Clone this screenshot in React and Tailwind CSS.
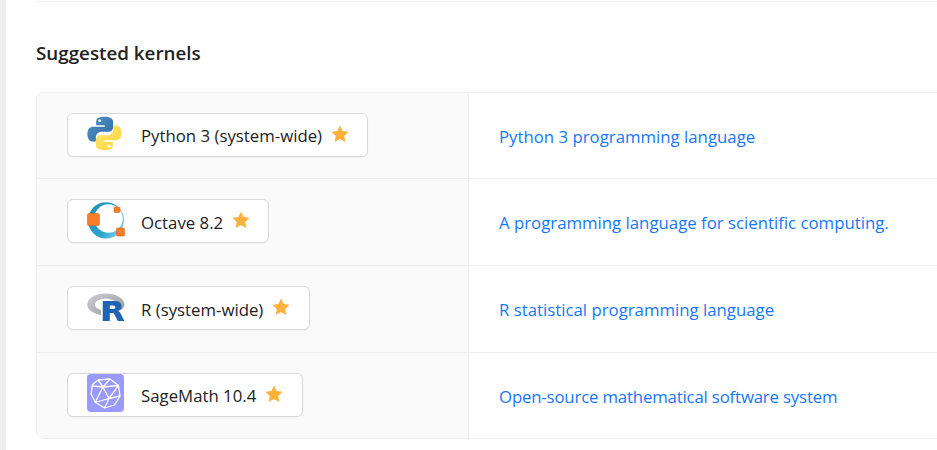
const FONT = "font-['Open_Sans',sans-serif]";

function Star() {
  return (
    <svg width="18" height="18" viewBox="0 0 18 18" className="shrink-0">
      <path d="M9 .6l2.600 5.500 6 .7-4.400 4.200 1.200 5.900L9 14 3.600 16.900l1.200-5.900L.4 6.800l6-.7z" fill="#ffb13b" />
    </svg>
  );
}

function PythonLogo() {
  return (
    <svg width="35" height="35" viewBox="0 0 36 36">
      <defs>
        <linearGradient id="pb" x1="0" y1="0" x2="1" y2="1">
          <stop offset="0" stopColor="#4f93c9" />
          <stop offset="1" stopColor="#336b9d" />
        </linearGradient>
        <linearGradient id="py" x1="0" y1="0" x2="1" y2="1">
          <stop offset="0" stopColor="#ffe873" />
          <stop offset="1" stopColor="#ffd43b" />
        </linearGradient>
      </defs>
      <path d="M17.600.8c-7 0-8.200 2.800-8.200 4.900v3.900h8.800v1.400H6.200C3 11 .4 13.500.4 18.500s2.400 7.800 5.400 7.800h3.300v-4.400c0-3.200 2.600-5.700 5.800-5.700h7.400c2.600 0 4.500-2 4.500-4.600V5.700C26.800 3 24 .8 17.600.8z" fill="url(#pb)" />
      <circle cx="13.200" cy="5" r="1.500" fill="#fff" />
      <path d="M18.400 35.200c7 0 8.200-2.800 8.200-4.900v-3.900h-8.800V25h12c3.200 0 5.800-2.500 5.800-7.500s-2.400-7.800-5.400-7.800h-3.300v4.400c0 3.200-2.600 5.700-5.800 5.700h-7.400c-2.600 0-4.500 2-4.500 4.600v5.900c0 2.700 2.800 4.900 9.200 4.900z" fill="url(#py)" />
      <circle cx="22.800" cy="31" r="1.500" fill="#fff" />
    </svg>
  );
}

function OctaveLogo() {
  return (
    <svg width="38" height="38" viewBox="0 0 38 38">
      <defs>
        <linearGradient id="oc" x1="0" y1="0.2" x2="1" y2="0.8">
          <stop offset="0" stopColor="#1f8fba" />
          <stop offset="0.6" stopColor="#2ea6cf" />
          <stop offset="1" stopColor="#8bdaf0" />
        </linearGradient>
      </defs>
      <path fillRule="evenodd" d="M19 1.200a18 18.200 0 1 0 0 36.400a18 18.200 0 1 0 0-36.400zM21.500 3.200a14.300 14.300 0 1 1 0 28.600a14.300 14.300 0 1 1 0-28.600z" fill="url(#oc)" />
      <rect x="0.500" y="12.500" width="12" height="12" rx="1.500" fill="#fb7c26" stroke="#d9691d" strokeWidth=".6" />
      <rect x="27" y="6" width="6" height="5.500" rx="1" fill="#fb7c26" stroke="#d9691d" strokeWidth=".6" />
      <rect x="29.500" y="27" width="8" height="8" rx="1" fill="#fb7c26" stroke="#d9691d" strokeWidth=".6" />
    </svg>
  );
}

function RLogo() {
  return (
    <svg width="38" height="30" viewBox="0 0 38 30">
      <defs>
        <linearGradient id="rg" x1="0" y1="0" x2="1" y2="1">
          <stop offset="0" stopColor="#cbced0" />
          <stop offset="1" stopColor="#9a9aa2" />
        </linearGradient>
      </defs>
      <path fillRule="evenodd" d="M18.500.5C8.300.5.300 5.300.300 11.500c0 4.800 4.800 8.900 13.700 10.500v-5C10 15.800 8 14 8 11.500 8 8 12.500 5.800 18.500 5.800S30 8 30 11.500c0 1.100-.4 2.200-1.200 3.100l4.300 3c2.800-1.600 4.400-3.700 4.400-6.100C37.500 5.300 28.700.5 18.500.5z" fill="url(#rg)" />
      <g transform="translate(3.300 .6) scale(.92 .92)">
        <path fillRule="evenodd" d="M13.500 8H27c4.500 0 7 2.600 7 5.800 0 2.500-1.400 4.300-3.700 5 1.100.5 1.800 1.200 2.400 2.300L37 29.700h-7.200l-3.700-7.300c-.5-.9-1-1.200-2-1.200h-2.900v8.500h-7.700zm7.700 4.800v3.900h3.900c1.300 0 2.100-.8 2.100-1.950s-.8-1.950-2.100-1.950z" fill="#2164b4" />
      </g>
    </svg>
  );
}

function SageLogo() {
  return (
    <svg width="37" height="38" viewBox="0 0 37 38">
      <rect width="37" height="38" rx="4" fill="#9999ff" />
      <g fill="none" stroke="#fff" strokeWidth="1.300" strokeLinejoin="round">
        <path d="M11 6l12-1 8.500 6.500 1.500 10.500-5.500 9-10 3-9-5.500-4.500-8.500 1.500-9.500z" />
        <path d="M11 6l5 7 7-8M16 13l15.500-1.500M16 13L5.500 12M16 13l6 11.500 11-2.500M22 24.500L17.500 34M22 24.500L8 28.500M16 13L8 28.500M31.500 11.500L22 24.500" />
      </g>
    </svg>
  );
}

const rows = [
  { name: "Python 3 (system-wide)", w: "w-[301px]", logo: <PythonLogo />, lp: "pb-[3px]", desc: "Python 3 programming language", dt: "", h: "h-[85px]" },
  { name: "Octave 8.2", w: "w-[202px]", logo: <OctaveLogo />, lp: "pb-[3px]", desc: "A programming language for scientific computing.", dt: "", h: "h-[87px] border-t border-[#eeeeee]" },
  { name: "R (system-wide)", w: "w-[243px]", logo: <RLogo />, lp: "pb-0", desc: "R statistical programming language", dt: "", h: "h-[87px] border-t border-[#eeeeee]" },
  { name: "SageMath 10.4", w: "w-[236px]", logo: <SageLogo />, lp: "pb-[3px]", desc: "Open-source mathematical software system", dt: "tracking-[-0.17px]", h: "h-[86px] border-t border-[#eeeeee]" },
];

export default function App() {
  return (
    <div className={`h-[450px] w-[937px] overflow-hidden bg-white flex ${FONT}`}>
      <div className="w-[6px] bg-[#eeeeee] shrink-0" />
      <div className="pl-[30px] flex-1 min-w-0">
        <div className="w-[1000px] h-[2px] flex border border-t-0 border-[#eeeeee] rounded-b-[8px]">
          <div className="w-[182px] border-r border-[#eeeeee]" />
        </div>
        <h2 className="mt-[39px] h-[24px] leading-[24px] text-[18.800px] font-semibold text-[#222222] whitespace-nowrap">Suggested kernels</h2>
        <div className="mt-[27px] w-[1000px] border border-[#eeeeee] rounded-[8px] overflow-hidden">
          {rows.map((r) => (
            <div key={r.name} className={`flex ${r.h}`}>
              <div className="w-[432px] shrink-0 bg-[#fafafa] border-r border-[#eeeeee] flex items-center pl-[30px] pb-[2px]">
                <div className={`${r.w} h-[44px] bg-white border border-[#d9d9d9] rounded-[6px] shadow-[0_1px_2px_rgba(0,0,0,0.04)] flex items-center`}>
                  <div className={`w-[73px] pl-[19px] ${r.lp} shrink-0 flex items-center`}>{r.logo}</div>
                  <span className="text-[16.800px] text-[#222222] whitespace-nowrap pt-[3px]">{r.name}</span>
                  <span className="ml-[9px] pb-[2px]"><Star /></span>
                </div>
              </div>
              <div className={`flex-1 flex items-center pl-[30px] pt-[2px] text-[16.800px] text-[#1677ff] whitespace-nowrap ${r.dt}`}>{r.desc}</div>
            </div>
          ))}
        </div>
      </div>
    </div>
  );
}
